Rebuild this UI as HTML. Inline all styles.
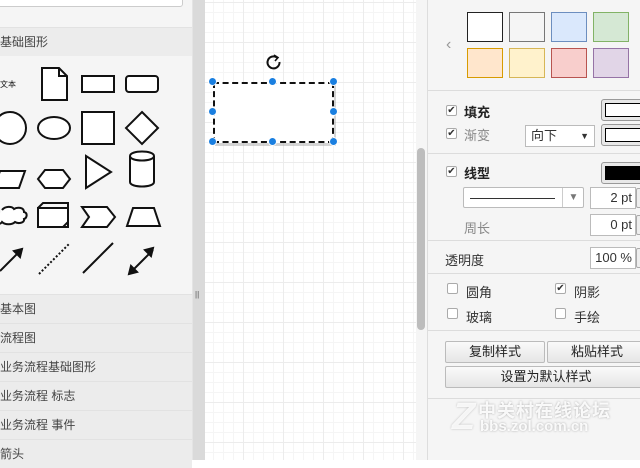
<!DOCTYPE html><html><head><meta charset="utf-8"><style>
*{margin:0;padding:0;box-sizing:border-box}
body{width:640px;height:460px;overflow:hidden;position:relative;background:#fff;font-family:"Liberation Sans","Noto Sans CJK SC",sans-serif;font-size:12px;color:#333}
.a{position:absolute}
.side{left:0;top:0;width:192px;height:460px;background:#f5f5f5}
.hdr{position:absolute;left:0;width:192px;height:29px;background:#ececec;border-top:1px solid #e2e2e2;line-height:28px;font-size:12px;color:#444;padding-left:0}
.canvas{left:205px;top:0;width:211px;height:460px;background-color:#fff;background-image:linear-gradient(#ececec 1px,transparent 1px),linear-gradient(90deg,#ececec 1px,transparent 1px),linear-gradient(#f5f5f5 1px,transparent 1px),linear-gradient(90deg,#f5f5f5 1px,transparent 1px);background-size:40px 40px,40px 40px,10px 10px,10px 10px;background-position:-2px 2px}
.panel{left:427px;top:0;width:213px;height:460px;background:#f5f5f5;border-left:1px solid #ddd}
.sw{position:absolute;width:36px;height:30px;border:1px solid}
.hr{position:absolute;left:428px;width:212px;height:1px;background:#dcdcdc}
.cb{position:absolute;width:11px;height:11px;border:1px solid #aaa;border-radius:2px;background:#fff;font-size:10px;line-height:9px;text-align:center;color:#333}
.lbl{position:absolute;font-size:13px}
.in{position:absolute;background:#fff;border:1px solid #bbb;font-size:13px;text-align:right;padding-right:3px;line-height:19px}
.btn{position:absolute;height:22px;border:1px solid #bbb;border-radius:2px;background:linear-gradient(#fafafa,#e6e6e6);text-align:center;line-height:20px;font-size:13px;color:#222}
.cbox{position:absolute;border:1px solid #999;border-radius:3px;background:#e8e8e8;padding:3px}
.h{position:absolute;width:9px;height:9px;border-radius:50%;background:#1a7fe0;border:1px solid #fff}
.sp{position:absolute;width:6px;height:20px;border:1px solid #aaa;background:#eee;border-radius:2px}
</style></head><body>
<div class="a side">
 <div class="a" style="left:-5px;top:-4px;width:188px;height:11px;background:#fff;border:1px solid #ccc;border-radius:3px"></div>
 <div class="hdr" style="top:27px">基础图形</div>
 <svg class="a" style="left:0;top:58px" width="192" height="230" fill="#fff" stroke="#111" stroke-width="2">
  <text x="0" y="29" font-size="8" fill="#111" stroke="none" font-family="Noto Sans CJK SC">文本</text>
  <path d="M42 10h17l8 8v24h-25z"/><path d="M59 10v8h8" fill="none"/>
  <rect x="82" y="18" width="32" height="16"/><rect x="126" y="18" width="32" height="16" rx="3"/>
  <circle cx="10" cy="70" r="16"/><ellipse cx="54" cy="70" rx="16" ry="11"/><rect x="82" y="54" width="32" height="32"/><path d="M142 54l16 16-16 16-16-16z"/>
  <path d="M0 113h25l-6 17h-25z"/><path d="M38 121l7-9h18l7 9-7 9h-18z"/><path d="M86 98l25 16-25 16z"/><path d="M130 98c0-6 24-6 24 0v26c0 6-24 6-24 0z"/><path d="M130 98c0 6 24 6 24 0" fill="none"/>
  <path d="M2 152c3-4 10-4 12-1c3-2 10-2 10 3c4 1 3 6 0 7c1 4-6 5-9 3c-3 3-10 3-13 0c-2 3-6 2-6-1" />
  <path d="M38 150h30v19h-30z"/><path d="M38 150l5-5h25v19l-5 5" fill="none"/>
  <path d="M82 149h25l8 10-8 10h-25l7-10z"/><path d="M127 168l6-18h21l6 18z"/>
  <path d="M0 213l22-22" fill="none"/><path d="M22 191l-8 2 6 6z" fill="#111"/>
  <path d="M39 216l30-30" fill="none" stroke-dasharray="2 2"/>
  <path d="M83 215l30-30" fill="none"/>
  <path d="M131 214l22-22" fill="none"/><path d="M153 190l-8 2 6 6zM129 216l8-2-6-6z" fill="#111"/>
 </svg>
 <div class="hdr" style="top:294px">基本图</div>
 <div class="hdr" style="top:323px">流程图</div>
 <div class="hdr" style="top:352px">业务流程基础图形</div>
 <div class="hdr" style="top:381px">业务流程 标志</div>
 <div class="hdr" style="top:410px">业务流程 事件</div>
 <div class="hdr" style="top:439px">箭头</div>
</div>
<div class="a" style="left:192px;top:0;width:13px;height:460px;background:#dadada;border-left:1px solid #e4e4e4"></div>
<div class="a" style="left:195px;top:290px;font-size:8px;color:#555">||</div>
<div class="a canvas"></div>
<div class="a" style="left:416px;top:0;width:11px;height:460px;background:#f5f5f5"></div>
<div class="a" style="left:417px;top:148px;width:8px;height:182px;background:#bdbdbd;border-radius:4px"></div>
<div class="a" style="left:215px;top:85px;width:121px;height:61px;background:#aaa;opacity:.5"></div>
<div class="a" style="left:213px;top:82px;width:121px;height:61px;background:#fff;border:2px dashed #111"></div>
<svg class="a" style="left:265px;top:53px" width="18" height="18" fill="none" stroke="#111" stroke-width="2"><path d="M12 4.5A6 6 0 1 0 14.5 9"/><path d="M9 2l4 2.5-3 3.5" stroke-width="1.6"/></svg>
<div class="h" style="left:208px;top:77px"></div><div class="h" style="left:268px;top:77px"></div><div class="h" style="left:329px;top:77px"></div>
<div class="h" style="left:208px;top:107px"></div><div class="h" style="left:329px;top:107px"></div>
<div class="h" style="left:208px;top:137px"></div><div class="h" style="left:268px;top:137px"></div><div class="h" style="left:329px;top:137px"></div>
<div class="a panel"></div>
<div class="a" style="left:446px;top:36px;color:#999;font-size:16px">‹</div>
<div class="sw" style="left:467px;top:12px;background:#fff;border-color:#222"></div>
<div class="sw" style="left:509px;top:12px;background:#f5f5f5;border-color:#777"></div>
<div class="sw" style="left:551px;top:12px;background:#dae8fc;border-color:#6c8ebf"></div>
<div class="sw" style="left:593px;top:12px;background:#d5e8d4;border-color:#82b366"></div>
<div class="sw" style="left:467px;top:48px;background:#ffe6cc;border-color:#d79b00"></div>
<div class="sw" style="left:509px;top:48px;background:#fff2cc;border-color:#d6b656"></div>
<div class="sw" style="left:551px;top:48px;background:#f8cecc;border-color:#b85450"></div>
<div class="sw" style="left:593px;top:48px;background:#e1d5e7;border-color:#9673a6"></div>
<div class="hr" style="top:90px"></div>
<div class="cb" style="left:446px;top:105px">✔</div><div class="lbl" style="left:464px;top:102px;font-weight:bold;color:#222">填充</div>
<div class="cbox" style="left:601px;top:99px;width:45px;height:22px"><div style="background:#fff;border:1px solid #000;height:14px"></div></div>
<div class="cb" style="left:446px;top:128px">✔</div><div class="lbl" style="left:464px;top:125px;color:#888">渐变</div>
<div class="a" style="left:525px;top:125px;width:70px;height:22px;background:#fff;border:1px solid #bbb;font-size:13px;line-height:20px;padding-left:5px">向下<span style="position:absolute;right:5px;font-size:9px">▼</span></div>
<div class="cbox" style="left:601px;top:124px;width:45px;height:22px"><div style="background:#fff;border:1px solid #000;height:14px"></div></div>
<div class="hr" style="top:153px"></div>
<div class="cb" style="left:446px;top:166px">✔</div><div class="lbl" style="left:464px;top:163px;font-weight:bold;color:#222">线型</div>
<div class="cbox" style="left:601px;top:162px;width:45px;height:22px"><div style="background:#000;height:14px"></div></div>
<div class="a" style="left:463px;top:187px;width:121px;height:21px;background:#fff;border:1px solid #bbb;border-radius:2px"><div style="position:absolute;left:6px;top:10px;width:85px;height:1px;background:#333"></div><div style="position:absolute;left:98px;top:0;height:19px;border-left:1px solid #ccc;width:22px;color:#777;font-size:10px;text-align:center;line-height:19px">▼</div></div>
<div class="in" style="left:590px;top:187px;width:46px;height:22px">2 pt</div><div class="sp" style="left:636px;top:188px"></div>
<div class="lbl" style="left:464px;top:218px;color:#888">周长</div>
<div class="in" style="left:590px;top:214px;width:46px;height:22px">0 pt</div><div class="sp" style="left:636px;top:215px"></div>
<div class="hr" style="top:240px"></div>
<div class="lbl" style="left:445px;top:250px">透明度</div>
<div class="in" style="left:590px;top:247px;width:46px;height:22px">100 %</div><div class="sp" style="left:636px;top:248px"></div>
<div class="hr" style="top:273px"></div>
<div class="cb" style="left:447px;top:283px"></div><div class="lbl" style="left:466px;top:282px">圆角</div>
<div class="cb" style="left:555px;top:283px">✔</div><div class="lbl" style="left:574px;top:282px">阴影</div>
<div class="cb" style="left:447px;top:308px"></div><div class="lbl" style="left:466px;top:307px">玻璃</div>
<div class="cb" style="left:555px;top:308px"></div><div class="lbl" style="left:574px;top:307px">手绘</div>
<div class="hr" style="top:330px"></div>
<div class="btn" style="left:445px;top:341px;width:100px">复制样式</div>
<div class="btn" style="left:547px;top:341px;width:100px">粘贴样式</div>
<div class="btn" style="left:445px;top:366px;width:202px">设置为默认样式</div>
<div class="hr" style="top:398px"></div>
<div class="a" style="left:452px;top:396px;font-size:38px;font-weight:bold;color:rgba(255,255,255,.85);font-style:italic;text-shadow:0 0 2px #bbb">Z</div>
<div class="a" style="left:478px;top:397px;font-size:18px;font-weight:bold;color:rgba(255,255,255,.9);text-shadow:0 0 2px #aaa;letter-spacing:1px">中关村在线论坛</div>
<div class="a" style="left:480px;top:418px;font-size:15px;font-weight:bold;color:rgba(255,255,255,.9);text-shadow:0 0 2px #aaa">bbs.zol.com.cn</div>
</body></html>
